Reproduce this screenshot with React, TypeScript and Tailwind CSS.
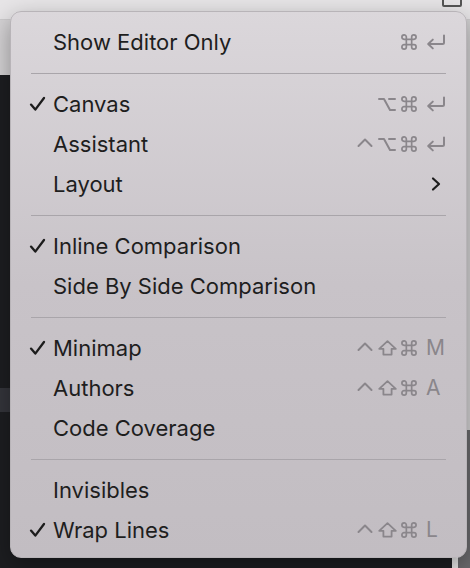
import { ReactNode } from "react";

const GRAY = "#8a868b";

function Check() {
  return (
    <svg width="17" height="16" viewBox="0 0 17 16" className="block">
      <path
        d="M2 8.6 L6.3 13.6 L15 2"
        fill="none"
        stroke="#1c1c1c"
        strokeWidth="2.3"
        strokeLinecap="round"
        strokeLinejoin="round"
      />
    </svg>
  );
}

function ReturnKey() {
  return (
    <svg width="20" height="16" viewBox="0 0 20 16" className="block">
      <path
        d="M18 1.5 V8.5 Q18 10 16.5 10 H2.5 M6.8 5.6 L2.2 10 L6.8 14.4"
        fill="none"
        stroke={GRAY}
        strokeWidth="2"
        strokeLinecap="round"
        strokeLinejoin="round"
      />
    </svg>
  );
}

function CmdKey() {
  return (
    <svg width="16" height="16" viewBox="0 0 18 18" className="block">
      <path
        d="M6 6 V3.5 A2.5 2.5 0 1 0 3.5 6 H14.5 A2.5 2.5 0 1 0 12 3.5 V14.5 A2.5 2.5 0 1 0 14.5 12 H3.5 A2.5 2.5 0 1 0 6 14.5 Z"
        fill="none"
        stroke={GRAY}
        strokeWidth="1.9"
        strokeLinejoin="round"
      />
    </svg>
  );
}

function OptKey() {
  return (
    <svg width="18" height="15" viewBox="0 0 18 15" className="block">
      <path
        d="M1 2 H6 L12 13 H17 M11 2 H17"
        fill="none"
        stroke={GRAY}
        strokeWidth="2"
        strokeLinecap="round"
        strokeLinejoin="round"
      />
    </svg>
  );
}

function ShiftKey() {
  return (
    <svg width="19" height="16" viewBox="0 0 19 16" className="block">
      <path
        d="M9.5 1.2 L17.8 8.8 H13.6 V14.6 H5.4 V8.8 H1.2 Z"
        fill="none"
        stroke={GRAY}
        strokeWidth="1.8"
        strokeLinejoin="round"
      />
    </svg>
  );
}

function CtrlKey() {
  return (
    <svg width="16" height="16" viewBox="0 0 16 16" className="block">
      <path
        d="M1.5 10 L8 3.5 L14.5 10"
        fill="none"
        stroke={GRAY}
        strokeWidth="2"
        strokeLinecap="round"
        strokeLinejoin="round"
      />
    </svg>
  );
}

function Chevron() {
  return (
    <svg width="12" height="16" viewBox="0 0 12 16" className="block">
      <path
        d="M3 2.5 L9 8 L3 13.5"
        fill="none"
        stroke="#1c1c1c"
        strokeWidth="2.2"
        strokeLinecap="round"
        strokeLinejoin="round"
      />
    </svg>
  );
}

function Slot({ children }: { children?: ReactNode }) {
  return <div className="w-[22px] flex justify-center items-center">{children}</div>;
}

function Shortcut({
  ctrl,
  opt,
  shift,
  cmd,
  keyChar,
}: {
  ctrl?: boolean;
  opt?: boolean;
  shift?: boolean;
  cmd?: boolean;
  keyChar?: string;
}) {
  return (
    <div className="flex items-center">
      <Slot>{ctrl ? <CtrlKey /> : null}</Slot>
      <Slot>{opt ? <OptKey /> : shift ? <ShiftKey /> : null}</Slot>
      <Slot>{cmd ? <CmdKey /> : null}</Slot>
      <div className="w-[26px] pl-[6px] flex items-center text-[21px] text-[#8a868b]">
        {keyChar === "return" ? <ReturnKey /> : keyChar}
      </div>
    </div>
  );
}

function Item({
  label,
  checked,
  right,
}: {
  label: string;
  checked?: boolean;
  right?: ReactNode;
}) {
  return (
    <div className="h-[40px] flex items-center pl-[18px] pr-[20px]">
      <div className="w-[24px] flex items-center">{checked ? <Check /> : null}</div>
      <div className="flex-1 text-[22px] text-[#1e1e1e]">{label}</div>
      {right}
    </div>
  );
}

function Separator() {
  return (
    <div className="h-[22px] flex items-center px-[20px]">
      <div className="h-px w-full bg-[#a9a5aa]" />
    </div>
  );
}

export default function App() {
  return (
    <div className="relative w-[470px] h-[568px] overflow-hidden font-['Inter',sans-serif] flex flex-col">
      <div className="h-[20px] bg-[#e7e5e7] border-b border-[#cdcbcd] flex justify-end items-start gap-4 pr-2">
        <div className="w-[20px] h-[10px] border-2 border-[#555] rounded-[2px] -mt-[3px]" />
      </div>
      <div className="flex-1 flex">
        <div className="w-[452px] flex flex-col">
          <div className="h-[55px] bg-[#d5d3d5]" />
          <div className="flex-1 bg-[#1d1e21] flex flex-col">
            <div className="h-[313px]" />
            <div className="h-[24px] bg-[#34353b]" />
          </div>
        </div>
        <div className="w-[6px] bg-[#e4e4e4]" />
        <div className="flex-1 flex flex-col">
          <div className="h-[410px] bg-[#d2d1d2]" />
          <div className="flex-1 bg-[#6a6a6d]" />
        </div>
      </div>

      <div className="absolute left-[10px] top-[11px] w-[457px] h-[547px] rounded-[11px] bg-gradient-to-b from-[#dbd7db] via-[#c8c3c8] to-[#c2bdc2] border border-[#b8b4b8] shadow-[0_8px_24px_rgba(0,0,0,0.35)] pt-[10px]">
        <Item label="Show Editor Only" right={<Shortcut cmd keyChar="return" />} />
        <Separator />
        <Item label="Canvas" checked right={<Shortcut opt cmd keyChar="return" />} />
        <Item label="Assistant" right={<Shortcut ctrl opt cmd keyChar="return" />} />
        <Item
          label="Layout"
          right={
            <div className="w-[26px] flex justify-end pr-[4px]">
              <Chevron />
            </div>
          }
        />
        <Separator />
        <Item label="Inline Comparison" checked />
        <Item label="Side By Side Comparison" />
        <Separator />
        <Item label="Minimap" checked right={<Shortcut ctrl shift cmd keyChar="M" />} />
        <Item label="Authors" right={<Shortcut ctrl shift cmd keyChar="A" />} />
        <Item label="Code Coverage" />
        <Separator />
        <Item label="Invisibles" />
        <Item label="Wrap Lines" checked right={<Shortcut ctrl shift cmd keyChar="L" />} />
      </div>
    </div>
  );
}
